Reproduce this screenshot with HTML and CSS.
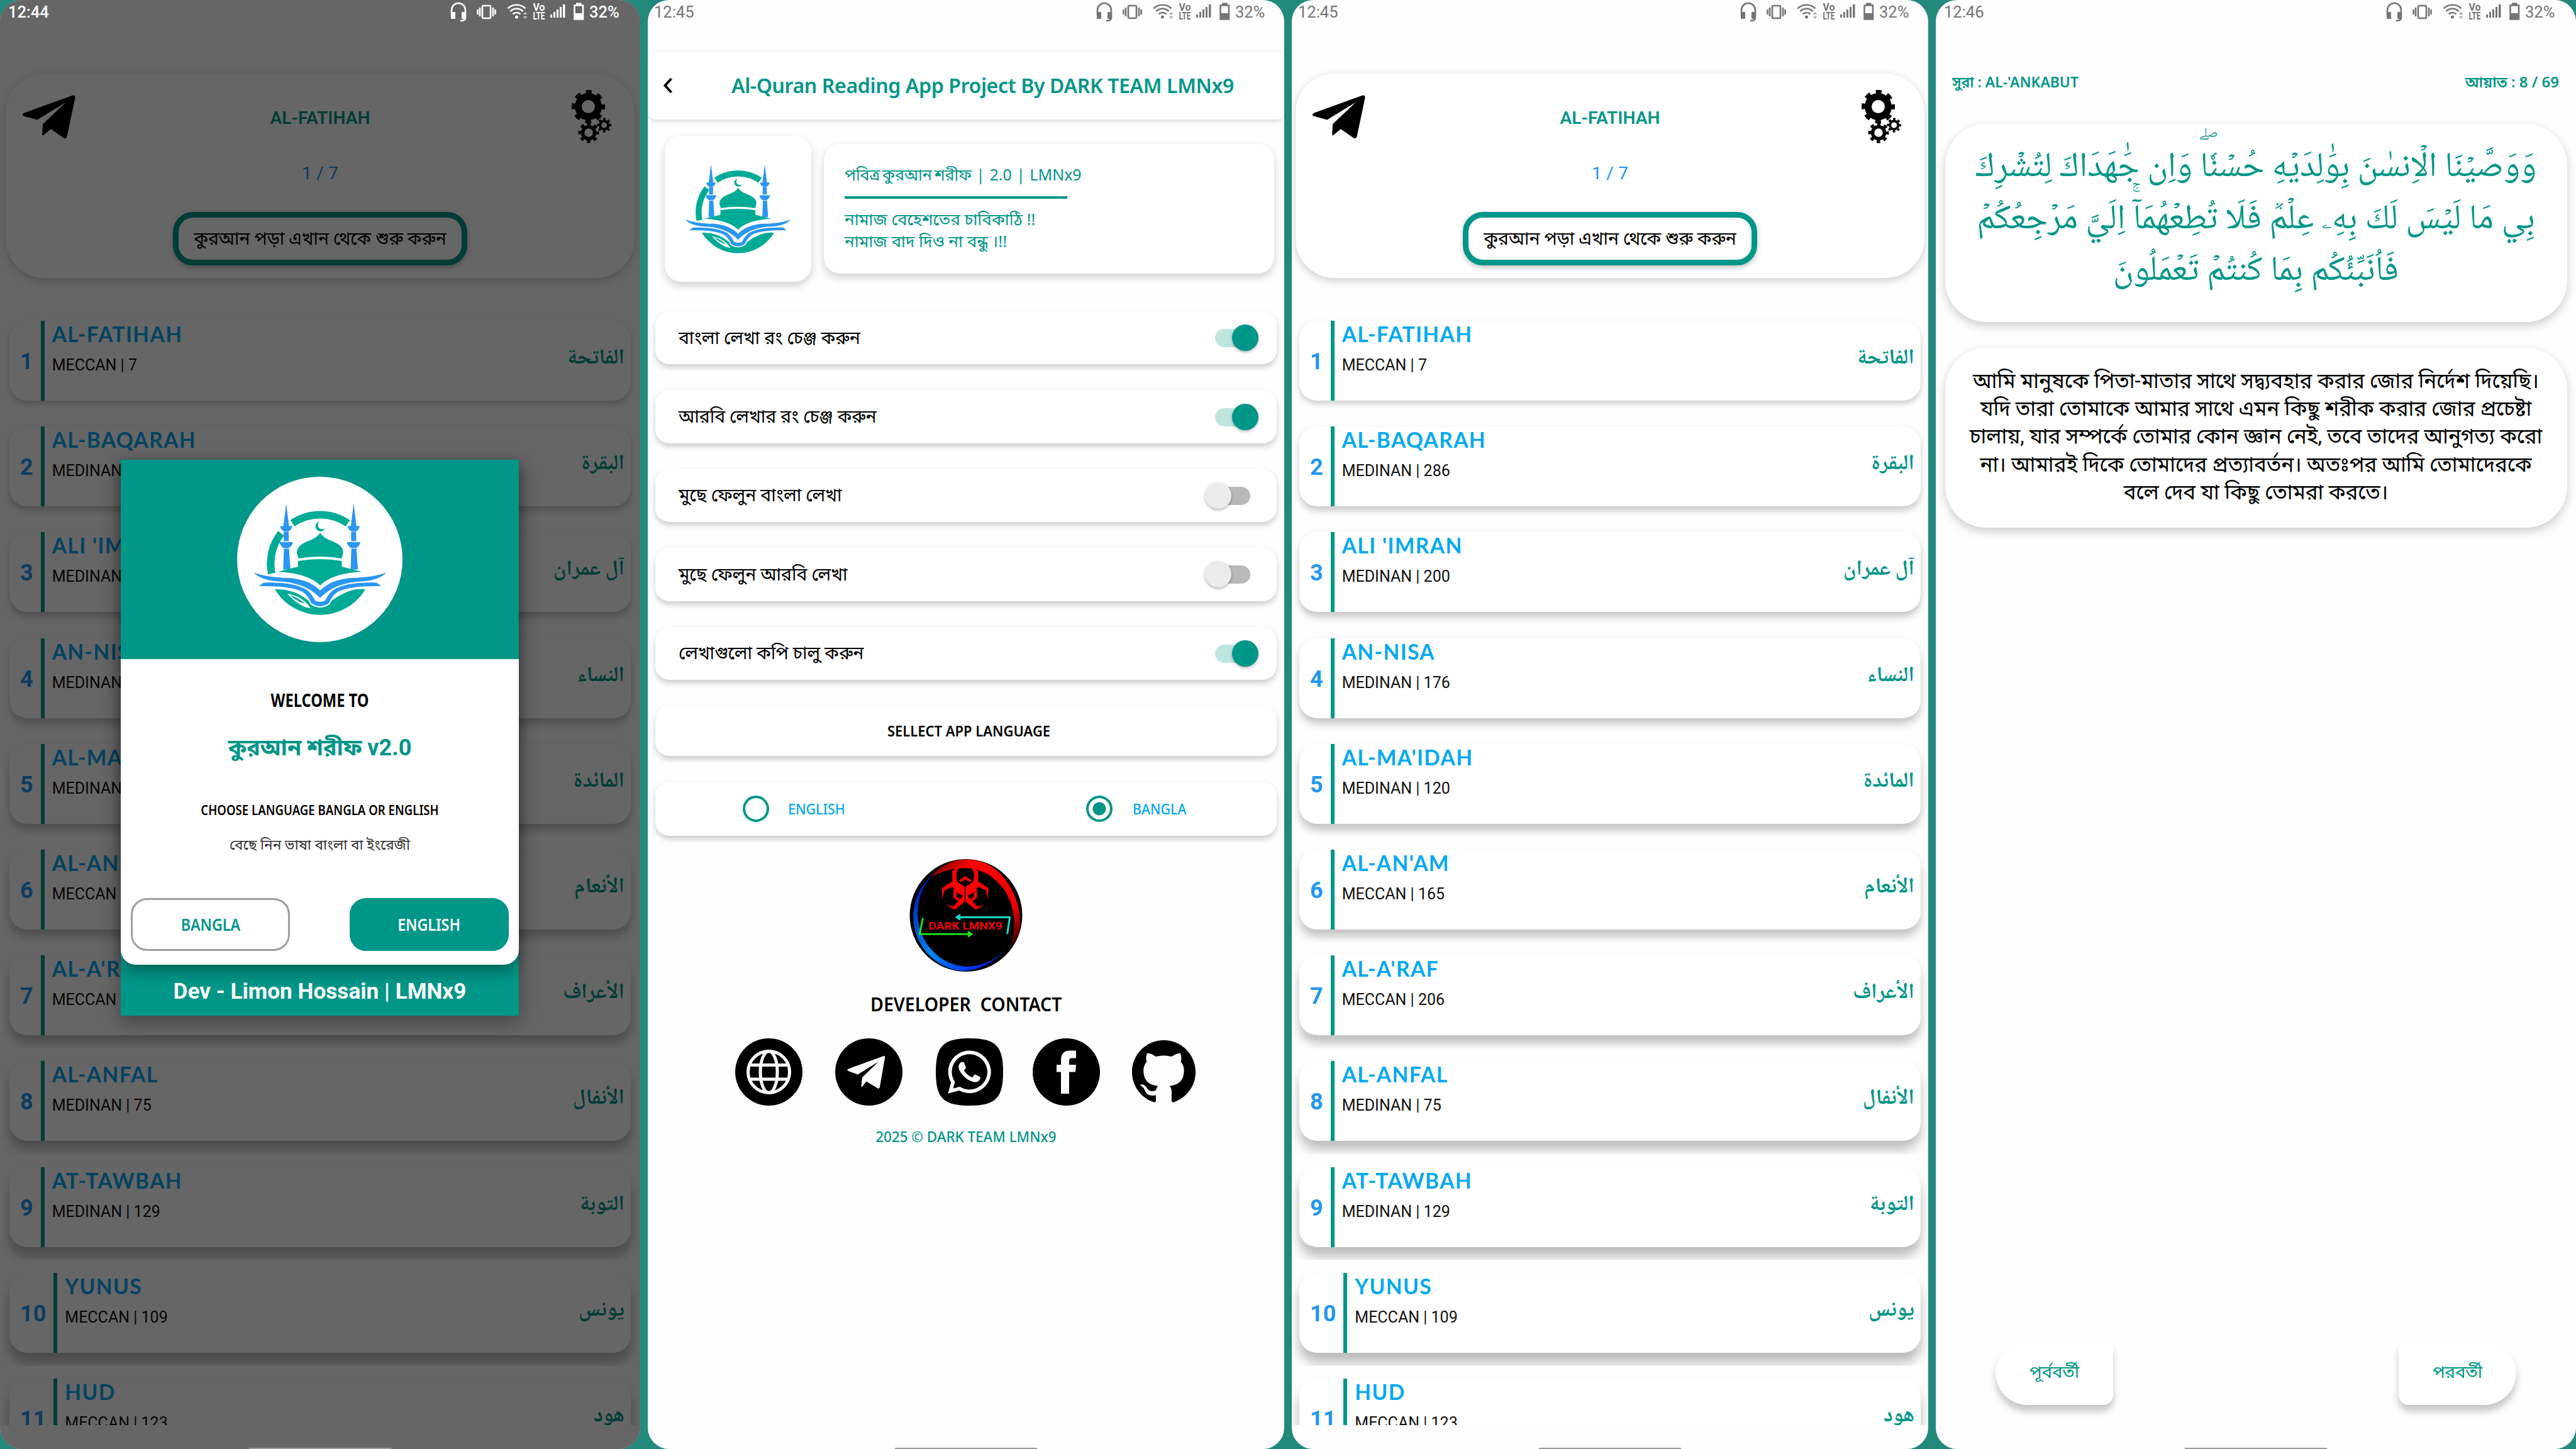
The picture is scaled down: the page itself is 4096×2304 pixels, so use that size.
FILE: index.html
```html
<!DOCTYPE html>
<html lang="bn">
<head>
<meta charset="utf-8">
<title>Al-Quran Reading App</title>
<link rel="stylesheet" href="styles.css">
</head>
<body>
<svg class="defs" aria-hidden="true">
  <symbol id="status" viewBox="713 0 215 38">
    <g fill="none" stroke="currentColor" stroke-width="2.6">
      <path d="M715 25V16a11 11 0 0 1 22 0v12q0 5-8 5"/>
      <path d="M804.500 13.500a20 20 0 0 1 28 0M808.500 18a14 14 0 0 1 20 0M812.500 22.500a8.500 8.500 0 0 1 12 0"/>
      <rect x="764" y="9" width="13" height="20" rx="2"/>
      <path d="M760 12v14M756.500 15v8M781 12v14M784.500 15v8"/>
      <path d="M910.500 8.500h13.500v22h-13.500z"/>
    </g>
    <g fill="currentColor">
      <rect x="714" y="19" width="7" height="11" rx="1"/><rect x="731" y="19" width="7" height="11" rx="1"/>
      <circle cx="818.500" cy="27" r="2.500"/>
      <path d="M828.500 23l3.500-4 3.500 4zM828.500 26l3.500 4 3.500-4z" opacity=".6"/>
      <path d="M872 23h3v5h-3zM877 19h3v9h-3zM882 15h3v13h-3zM887 11h3v17h-3zM892 7h3.500v21h-3.500z"/>
      <path d="M913 4.500h8.500v3.500h-8.500zM910 21h15v10h-15z"/>
      <text x="844.500" y="17" class="volte" textLength="19" lengthAdjust="spacingAndGlyphs">Vo</text>
      <text x="844.500" y="31" class="volte" textLength="19" lengthAdjust="spacingAndGlyphs">LTE</text>
    </g>
  </symbol>
  <symbol id="plane" viewBox="0 0 86 71">
    <path d="M80 1Q86-1 85 5L72 67Q70 72 66 69L46 55 34 65Q32 66 32 62L33 47 70 12 24 40 2 34Q-2 32 3 29Z"/>
  </symbol>
  <symbol id="gears" viewBox="0 0 64 85">
    <g fill="none" stroke="#000">
      <circle cx="27.500" cy="26.500" r="16" stroke-width="11"/>
      <circle cx="27.500" cy="26.500" r="23.500" stroke-width="6" stroke-dasharray="9.230" stroke-dashoffset="4.600"/>
      <circle cx="28" cy="68" r="9.500" stroke-width="5.500"/>
      <circle cx="28" cy="68" r="14" stroke-width="5" stroke-dasharray="5.500" stroke-dashoffset="2.750"/>
      <circle cx="52.700" cy="56" r="6.500" stroke-width="4"/>
      <circle cx="52.700" cy="56" r="9.700" stroke-width="3.500" stroke-dasharray="3.810" stroke-dashoffset="1.900"/>
    </g>
  </symbol>
  <symbol id="minaret" viewBox="0 0 24 108">
    <path d="M10.700 0L15.200 36H6.200zM1 36h19.500q-1 6-6.500 8.500H7.500Q2 42 1 36zM6.700 45h8v15h-8zM0 61.500h21.400q-1 6-6.400 9.300H6.400Q1 67.500 0 61.500zM7 72h8.200l2.300 33H5.900z"/>
  </symbol>
  <symbol id="logo" viewBox="26 42 212 182">
    <g fill="none" stroke="#00ab96" stroke-width="12">
      <path d="M88 74A78 78 0 0 1 176 74"/>
      <path d="M70 90A78 78 0 0 0 55 154" stroke-width="12"/>
    </g>
    <path fill="#00ab96" d="M60 179A84 84 0 0 0 204 179Q180 176 152 196L132 206 112 196Q90 178 60 179Z"/>
    <path fill="#fff" d="M80 186Q100 208 117 209 104 190 80 186Z"/>
    <path fill="#00ab96" d="M84 188Q97 192 108 202 94 198 84 188Z"/>
    <g fill="#2b96f3">
      <use href="#minaret" x="67.400" y="42.600" width="24" height="108"/>
      <use href="#minaret" x="174.600" y="42.600" width="24" height="108"/>
    </g>
    <path fill="#00ab96" d="M131 71a8 8 0 1 0 9 11 7 7 0 1 1-9-11zM132 89Q135 96 150 102 172 110 168 124L166 130Q132 124 98 130L95.500 124Q92 110 114 102 129 96 132 89zM97 134Q132 128 166.500 134V143L198 151Q150 154 132 173 114 154 65 151L97 143Z"/>
    <g fill="#2b96f3" stroke="#fff" stroke-width="4" paint-order="stroke">
      <path d="M34.800 174L42 168.500Q92 167 110 179 119 186 124 197 132 201 140 197 145 186 154 179 172 167 222 168.500L229 174Q180 173 160 183 151 189 146 201 132 211 118 201 113 189 104 183 84 173 34.800 174Z"/>
      <path d="M26.300 152Q44 160 84 161 116 164 132 181 148 164 180 161 220 160 237.500 152 226 166 190 167 152 171 132 193 112 171 74 167 38 166 26.300 152Z"/>
    </g>
  </symbol>
</svg>

<main class="board">
  <section class="screen dark">
    <div class="status"><span class="time t">12:44</span><svg class="sicons"><use href="#status"/></svg><span class="batt t">32%</span></div>
    <div class="home"></div>
    <div class="scrim"></div>
    <div class="dialog">
      <div class="sheet">
        <div class="banner"><div class="disc"><svg><use href="#logo"/></svg></div></div>
        <p class="welcome t">WELCOME TO</p>
        <p class="appname t">কুরআন শরীফ v2.0</p>
        <p class="choose t">CHOOSE LANGUAGE BANGLA OR ENGLISH</p>
        <p class="choose-bn t">বেছে নিন ভাষা বাংলা বা ইংরেজী</p>
        <div class="actions"><button><span class="t">BANGLA</span></button><button class="solid"><span class="t">ENGLISH</span></button></div>
      </div>
      <div class="dev"><span class="t">Dev - Limon Hossain | LMNx9</span></div>
    </div>
    <i class="pill"></i>
  </section>

  <section class="screen">
    <div class="status"><span class="time t">12:45</span><svg class="sicons"><use href="#status"/></svg><span class="batt t">32%</span></div>
    <header class="bar">
      <svg class="back" viewBox="0 0 16 26"><path d="M13.500 2L3.500 13 13.500 24" fill="none" stroke="#000" stroke-width="4"/></svg>
      <h1 class="t">Al-Quran Reading App Project By DARK TEAM LMNx9</h1>
    </header>
    <div class="about">
      <div class="logo-card"><svg><use href="#logo"/></svg></div>
      <div class="info">
        <p class="version t">পবিত্র কুরআন শরীফ&nbsp; |&nbsp; 2.0&nbsp; |&nbsp; LMNx9</p>
        <hr>
        <p class="t">নামাজ বেহেশতের চাবিকাঠি !!</p>
        <p class="t">নামাজ বাদ দিও না বন্ধু ।!!</p>
      </div>
    </div>
    <div class="settings">
      <div class="opt"><span class="t">বাংলা লেখা রং চেঞ্জ করুন</span><i class="switch on"></i></div>
      <div class="opt"><span class="t">আরবি লেখার রং চেঞ্জ করুন</span><i class="switch on"></i></div>
      <div class="opt"><span class="t">মুছে ফেলুন বাংলা লেখা</span><i class="switch"></i></div>
      <div class="opt"><span class="t">মুছে ফেলুন আরবি লেখা</span><i class="switch"></i></div>
      <div class="opt"><span class="t">লেখাগুলো কপি চালু করুন</span><i class="switch on"></i></div>
      <div class="opt select"><span class="t">SELLECT APP LANGUAGE</span></div>
      <div class="opt langs">
        <label><i class="radio"></i><span class="t">ENGLISH</span></label>
        <label><i class="radio picked"></i><span class="t">BANGLA</span></label>
      </div>
    </div>
    <svg class="badge" viewBox="0 0 180 180">
      <defs>
        <linearGradient id="ringR" x1="0" y1="0" x2="1" y2="1"><stop offset="0" stop-color="#500"/><stop offset=".25" stop-color="#f00"/><stop offset=".75" stop-color="#e00"/><stop offset="1" stop-color="#200"/></linearGradient>
        <linearGradient id="ringB" x1="0" y1="0" x2="1" y2="1"><stop offset="0" stop-color="#00a"/><stop offset=".5" stop-color="#08e"/><stop offset=".8" stop-color="#03f"/><stop offset="1" stop-color="#004"/></linearGradient>
      </defs>
      <circle cx="90" cy="90" r="90"/>
      <path fill="url(#ringR)" d="M34 28Q60 0 92 0.500 134 2 158 40 180 76 176 112 172 130 162 138 176 90 152 50 110-8 34 28z"/>
      <path fill="url(#ringB)" d="M40 22A88 88 0 0 0 82 179 88 88 0 0 0 154 142 82 82 0 0 1 90 172 82 86 0 0 1 40 22z"/>
      <g fill="#f00">
        <path id="horn" d="M82 10L68 19V36L52 46V64L56 50 68 44 78 55 88 60V44L77 37 75 34V20zM88 56L80 64 70 76 58 73 72 81 88 68zM70 48V62L82 70V65L75 60V48z"/>
        <use href="#horn" transform="translate(177.600) scale(-1 1)"/>
        <path d="M79 34L89 27 99 34 96 37 89 32 82 37z"/>
      </g>
      <g fill="none" stroke-width="3"><path stroke="#1fe01f" d="M21 94L16 120H98M93 116L99 120 93 124"/><path stroke="#1fd8c8" d="M81 89L75 93 81 97M76 93H160L156 120"/></g>
      <text x="30" y="113" textLength="118" lengthAdjust="spacingAndGlyphs">DARK LMNX9</text>
    </svg>
    <h2 class="t">DEVELOPER&nbsp; CONTACT</h2>
    <div class="social">
      <svg viewBox="0 0 107 107"><circle cx="53.500" cy="53.500" r="53.500"/><g fill="none" stroke="#fff" stroke-width="5"><circle cx="53.500" cy="53.500" r="33"/><ellipse cx="53.500" cy="53.500" rx="13.500" ry="33"/><path d="M24 42.500H83M24 65H83"/></g></svg>
      <svg viewBox="0 0 107 107"><circle cx="53.500" cy="53.500" r="53.500"/><path fill="#fff" d="M76 28.500Q80 26.500 79 31L71 77Q70 82 66 78.500L49.500 68.500 43.500 76.500Q41.500 78.500 41.500 74.500L43 62 69 37 36 57.500 21 52Q17.500 50 21 48.500Z"/></svg>
      <svg viewBox="0 0 107 107"><path d="M53.500 0C95 0 107 12 107 53.500S95 107 53.500 107 0 95 0 53.500 12 0 53.500 0z"/><g transform="translate(19.400 14.600) scale(.1525)" fill="#fff"><path d="M380.900 97.100C339 55.100 283.200 32 223.900 32c-122.400 0-222 99.600-222 222 0 39.100 10.200 77.300 29.600 111L0 480l117.700-30.900c32.400 17.700 68.900 27 106.100 27h.1c122.300 0 224.100-99.600 224.100-222 0-59.300-25.200-115-67.100-157zm-157 341.600c-33.200 0-65.700-8.900-94-25.700l-6.700-4-69.800 18.300L72 359.200l-4.400-7c-18.500-29.400-28.200-63.300-28.200-98.200 0-101.700 82.800-184.500 184.600-184.500 49.300 0 95.600 19.200 130.400 54.100 34.800 34.900 56.200 81.200 56.100 130.500 0 101.800-84.900 184.600-186.600 184.600zm101.200-138.200c-5.500-2.800-32.800-16.200-37.900-18-5.100-1.900-8.800-2.800-12.500 2.800-3.700 5.600-14.300 18-17.600 21.800-3.200 3.700-6.500 4.200-12 1.400-32.600-16.300-54-29.100-75.500-66-5.700-9.800 5.700-9.100 16.300-30.300 1.800-3.700.9-6.900-.5-9.700-1.400-2.800-12.500-30.100-17.100-41.200-4.500-10.800-9.100-9.300-12.500-9.500-3.200-.2-6.900-.2-10.600-.2-3.700 0-9.700 1.400-14.800 6.900-5.100 5.600-19.400 19-19.400 46.300 0 27.300 19.900 53.700 22.600 57.400 2.800 3.700 39.100 59.700 94.800 83.800 35.200 15.200 49 16.500 66.600 13.900 10.700-1.600 32.800-13.400 37.400-26.400 4.600-13 4.600-24.100 3.200-26.400-1.300-2.500-5-3.900-10.500-6.600z"/></g></svg>
      <svg viewBox="0 0 107 107"><circle cx="53.500" cy="53.500" r="53.500"/><path fill="#fff" d="M45 88V53.500H38V42H45V35Q45 19.500 59 19.500H69V31.500H62Q58 31.500 58 35.500V42H69L68 53.500H58V88Z"/></svg>
      <svg viewBox="-.7 -.4 25.400 25.400"><path d="M12 .297c-6.630 0-12 5.373-12 12 0 5.303 3.438 9.800 8.205 11.385.6.113.82-.258.82-.577 0-.285-.01-1.040-.015-2.040-3.338.724-4.042-1.610-4.042-1.610C4.422 18.070 3.633 17.700 3.633 17.700c-1.087-.744.084-.729.084-.729 1.205.084 1.838 1.236 1.838 1.236 1.070 1.835 2.809 1.305 3.495.998.108-.776.417-1.305.76-1.605-2.665-.3-5.466-1.332-5.466-5.930 0-1.310.465-2.380 1.235-3.220-.135-.303-.54-1.523.105-3.176 0 0 1.005-.322 3.300 1.230.96-.267 1.980-.399 3-.405 1.020.006 2.040.138 3 .405 2.280-1.552 3.285-1.230 3.285-1.230.645 1.653.24 2.873.12 3.176.765.840 1.230 1.910 1.230 3.220 0 4.610-2.805 5.625-5.475 5.920.42.360.81 1.096.81 2.220 0 1.606-.015 2.896-.015 3.286 0 .315.21.690.825.570C20.565 22.092 24 17.592 24 12.297c0-6.627-5.373-12-12-12"/></svg>
    </div>
    <p class="copy t">2025 © DARK TEAM LMNx9</p>
    <i class="pill"></i>
  </section>

  <section class="screen">
    <div class="status"><span class="time t">12:45</span><svg class="sicons"><use href="#status"/></svg><span class="batt t">32%</span></div>
    <div class="home"></div>
    <i class="pill"></i>
  </section>

  <section class="screen">
    <div class="status"><span class="time t">12:46</span><svg class="sicons"><use href="#status"/></svg><span class="batt t">32%</span></div>
    <div class="ayah-head"><span class="sura t">সুরা : AL-'ANKABUT</span><span class="t">আয়াত : 8 / 69</span></div>
    <div class="ayah" lang="ar" dir="rtl">
      <p class="t">وَوَصَّيۡنَا الۡاِنسٰنَ بِوَٰلِدَيۡهِ حُسۡنٗاۖ وَاِن جَٰهَدَاكَ لِتُشۡرِكَ</p>
      <p class="t">بِي مَا لَيۡسَ لَكَ بِهِۦ عِلۡمٞ فَلَا تُطِعۡهُمَآۚ اِلَيَّ مَرۡجِعُكُمۡ</p>
      <p class="t">فَاُنَبِّئُكُم بِمَا كُنتُمۡ تَعۡمَلُونَ</p>
    </div>
    <div class="meaning">
      <p class="t">আমি মানুষকে পিতা-মাতার সাথে সদ্ব্যবহার করার জোর নির্দেশ দিয়েছি।</p>
      <p class="t">যদি তারা তোমাকে আমার সাথে এমন কিছু শরীক করার জোর প্রচেষ্টা</p>
      <p class="t">চালায়, যার সম্পর্কে তোমার কোন জ্ঞান নেই, তবে তাদের আনুগত্য করো</p>
      <p class="t">না। আমারই দিকে তোমাদের প্রত্যাবর্তন। অতঃপর আমি তোমাদেরকে</p>
      <p class="t">বলে দেব যা কিছু তোমরা করতে।</p>
    </div>
    <div class="pager"><button class="prev t">পূর্ববর্তী</button><button class="next t">পরবর্তী</button></div>
    <i class="pill"></i>
  </section>
</main>
<script src="app.js"></script>
</body>
</html>
```
FILE: styles.css
```css
* { box-sizing: border-box; margin: 0; padding: 0; }
:root { --teal: #009688; --sky: #03a9f4; --ui: "Noto Sans", "Noto Sans Bengali", sans-serif; }
body { width: 4096px; height: 2304px; overflow: hidden; background: #22897b; font-family: Roboto, "Noto Sans Bengali", "Noto Sans", sans-serif; color: #000; }
button { font: inherit; border: 0; background: none; }
.defs { position: absolute; width: 0; height: 0; }
.t { white-space: nowrap; }
.board { display: grid; grid-template-columns: 1018px 1012px 1012px 1018px; gap: 12px; height: 2304px; }
.screen { position: relative; display: flex; flex-direction: column; align-items: center; overflow: hidden; border-radius: 34px; background: #fefefe; }
.status { position: relative; z-index: 3; flex: none; display: flex; width: 1012px; height: 38px; padding-left: 10px; color: #757575; font-size: 25.500px; line-height: 38px; }
.time { width: 703px; }
.sicons { width: 215px; height: 38px; }
.batt { margin-left: 6px; }
.volte { font: bold 16px Roboto, sans-serif; }
.dark .status { color: #fff; font-weight: 500; }
.pill { position: absolute; bottom: 0; left: calc(50% - 113px); width: 226px; height: 2px; background: #999; z-index: 3; }

.home { width: 1012px; }
.hero { display: grid; grid-template-columns: 120px 1fr 120px; width: 1000px; height: 325px; margin: 79px 6px 0; border-radius: 62px; background: #fff; box-shadow: 0 4px 14px rgba(0,0,0,.2); }
.plane { width: 86px; height: 70px; margin: 34px 0 0 26px; }
.gears { width: 64px; height: 85px; margin: 26px 0 0 19px; }
.hero-mid { display: flex; flex-direction: column; align-items: center; }
.hero-mid h3 { margin-top: 51px; font-size: 28.200px; line-height: 40px; font-weight: 600; color: var(--teal); }
.count { margin-top: 48px; font-size: 28.500px; line-height: 40px; color: #2196f3; }
.start { width: 468px; height: 85px; margin-top: 41px; border: 9px solid var(--teal); border-radius: 32px; font-size: 28.200px; line-height: 67px; box-shadow: 0 3px 8px rgba(0,0,0,.25); }
.list { display: flex; flex-direction: column; gap: 41.200px; height: 1824px; padding: 68px 12px 0; overflow: hidden; }
.surah { flex: none; display: flex; height: 127px; border-radius: 28px; background: #fff; clip-path: inset(-8px -12px -21px); }
.num { padding: 0 12px 0 17px; font-size: 36px; font-weight: 700; line-height: 130px; color: #2196f3; }
.rule { width: 6px; background: var(--teal); }
.names { flex: 1; padding: 0 0 0 12px; }
.names h4 { font: 700 33.500px/43px Lato, sans-serif; color: var(--sky); letter-spacing: 1.400px; }
.names p { margin-top: 10px; font-size: 25px; line-height: 36px; color: #111; }
.arabic { padding-right: 10px; font: 700 34px/122px "Noto Naskh Arabic", "Noto Sans Arabic", "DejaVu Sans", sans-serif; color: var(--teal); }

.scrim { position: absolute; inset: 0; z-index: 1; background: rgba(0,0,0,.6); }
.dialog { position: absolute; z-index: 2; left: 192px; top: 731px; width: 633px; height: 884px; background: var(--teal); box-shadow: 0 10px 30px rgba(0,0,0,.35); text-align: center; }
.sheet { height: 803px; border-radius: 0 0 24px 24px; background: #fff; box-shadow: 0 10px 24px rgba(0,0,0,.35); }
.banner { display: flex; justify-content: center; align-items: center; height: 317px; background: var(--teal); }
.disc { width: 263px; height: 263px; padding: 42px 0 0 26px; border-radius: 50%; background: #fff; }
.disc svg { display: block; width: 212px; height: 182px; }
.welcome { margin-top: 45px; font: 700 28px/40px var(--ui); transform: scaleX(.845); }
.appname { margin-top: 34px; font-size: 36px; line-height: 44px; font-weight: 700; color: var(--teal); }
.choose { margin-top: 58px; font: 600 22px/36px var(--ui); transform: scaleX(.846); }
.choose-bn { margin-top: 21px; font-size: 22.600px; line-height: 36px; color: #333; }
.actions { display: flex; justify-content: space-between; padding: 66px 16px 0; }
.actions button { width: 253px; height: 84px; border: 3px solid #9e9e9e; border-radius: 26px; font: 600 27px/78px var(--ui); color: var(--teal); }
.actions span { display: inline-block; transform: scaleX(.86); }
.actions .solid { border-color: var(--teal); background: var(--teal); color: #fff; }
.dev { font-size: 35.200px; line-height: 85px; font-weight: 700; color: #fff; }

.bar { display: flex; align-items: center; flex: none; width: 1012px; height: 108px; margin-top: 44px; padding-left: 24px; border-radius: 12px; background: #fff; box-shadow: 0 3px 8px rgba(0,0,0,.14); }
.back { width: 16px; height: 26px; }
.bar h1 { margin-left: 93px; font: 600 32px/50px var(--ui); letter-spacing: -.360px; color: var(--teal); }
.about { display: flex; align-items: center; gap: 20px; width: 969px; height: 232px; margin: 26px 0 0 11px; }
.logo-card { width: 233px; height: 232px; padding: 45px 0 0 32px; border-radius: 26px; background: #fff; box-shadow: 0 6px 14px rgba(0,0,0,.18); }
.logo-card svg { width: 169px; height: 145px; }
.info { width: 716px; height: 206px; padding: 31px 33px; border-radius: 26px; background: #fff; box-shadow: 0 6px 14px rgba(0,0,0,.18); color: var(--teal); font-family: var(--ui); font-size: 26px; line-height: 35px; }
.version { font-size: 25px; word-spacing: -2.800px; }
.info hr { width: 354px; height: 4px; margin: 17px 0 15px; border: 0; background: var(--teal); }
.settings { display: flex; flex-direction: column; gap: 41px; margin-top: 47px; }
.opt { display: flex; align-items: center; justify-content: space-between; width: 988px; height: 84.400px; padding: 0 28px 0 37px; border-radius: 22px; background: #fff; box-shadow: 0 5px 10px rgba(0,0,0,.2); font-size: 28.300px; line-height: 87px; }
.switch { position: relative; width: 86px; height: 42px; }
.switch::before { content: ""; position: absolute; left: 16px; top: 7px; width: 56px; height: 29px; border-radius: 15px; background: #b9b9b9; }
.switch::after { content: ""; position: absolute; left: 0; top: 0; width: 42px; height: 42px; border-radius: 50%; background: #ececec; box-shadow: 0 2px 4px rgba(0,0,0,.3); }
.switch.on::before { background: #bfe5e1; }
.switch.on::after { left: 43px; background: var(--teal); }
.opt.select { justify-content: center; height: 80px; font: 600 24px/80px var(--ui); }
.select span { transform: scaleX(.915); }
.opt.langs { height: 86px; padding: 0 133px 0 139px; font: 500 24px/86px var(--ui); color: var(--sky); }
.langs label { display: flex; align-items: center; gap: 30px; }
.langs span { transform: scaleX(.89); transform-origin: left; }
.radio { width: 42px; height: 42px; border: 4px solid var(--teal); border-radius: 50%; }
.radio.picked { background: radial-gradient(circle, var(--teal) 10px, transparent 11px); margin-right: 2px; }
.badge { flex: none; width: 180px; height: 179px; margin-top: 37px; }
.badge text { font: 700 17px Roboto, sans-serif; fill: #e00; }
h2 { margin-top: 32px; font: 600 30px/40px var(--ui); transform: scaleX(.95); }
.social { display: flex; gap: 52.500px; margin-top: 34px; }
.social svg { width: 107px; height: 107px; }
.social svg:nth-child(n+4) { margin-left: -5px; }
.copy { margin-top: 31px; font: 500 24px/36px var(--ui); color: var(--teal); transform: scaleX(.933); }

.ayah-head { display: flex; justify-content: space-between; width: 1012px; margin-top: 72px; padding: 0 24px 0 23px; font: 600 24px/40px var(--ui); color: var(--teal); }
.sura { transform: scaleX(.953); transform-origin: left; }
.ayah, .meaning { width: 989px; border-radius: 66px; background: #fff; box-shadow: 0 6px 16px rgba(0,0,0,.2); text-align: center; }
.ayah { height: 315px; margin-top: 47px; padding-top: 30px; font: 400 55.500px/82.500px "Noto Naskh Arabic", "Noto Sans Arabic", "DejaVu Sans", sans-serif; color: var(--teal); }
.meaning { height: 286px; margin-top: 41px; padding-top: 31px; font-size: 33.200px; line-height: 44.200px; }
.pager { display: flex; justify-content: space-between; width: 828px; margin-top: 1293px; }
.pager button { width: 187px; height: 102px; border-radius: 51px 16px 16px 51px; background: #fff; box-shadow: 0 10px 12px rgba(0,0,0,.22); font-size: 27.500px; color: var(--teal); }
.pager .next { border-radius: 16px 51px 51px 16px; }
```
FILE: app.js
```js
const surahs = [
  ["AL-FATIHAH", "MECCAN | 7", "الفاتحة"],
  ["AL-BAQARAH", "MEDINAN | 286", "البقرة"],
  ["ALI 'IMRAN", "MEDINAN | 200", "آل عمران"],
  ["AN-NISA", "MEDINAN | 176", "النساء"],
  ["AL-MA'IDAH", "MEDINAN | 120", "المائدة"],
  ["AL-AN'AM", "MECCAN | 165", "الأنعام"],
  ["AL-A'RAF", "MECCAN | 206", "الأعراف"],
  ["AL-ANFAL", "MEDINAN | 75", "الأنفال"],
  ["AT-TAWBAH", "MEDINAN | 129", "التوبة"],
  ["YUNUS", "MECCAN | 109", "يونس"],
  ["HUD", "MECCAN | 123", "هود"]
];

// Row shadows deepen towards the bottom of the list.
const row = ([name, info, arabic], i) => `
  <article class="surah" style="box-shadow:0 ${5 + i * 1.2}px ${10 + i}px rgba(0,0,0,${0.2 + i * 0.008})">
    <span class="num">${i + 1}</span><i class="rule"></i>
    <div class="names"><h4><span class="t">${name}</span></h4><p><span class="t">${info}</span></p></div>
    <span class="arabic t" lang="ar" dir="rtl">${arabic}</span>
  </article>`;

document.querySelectorAll(".home").forEach((home) => {
  home.innerHTML = `
    <div class="hero">
      <svg class="plane"><use href="#plane"/></svg>
      <div class="hero-mid"><h3 class="t">AL-FATIHAH</h3><p class="count t">1 / 7</p><button class="start t">কুরআন পড়া এখান থেকে শুরু করুন</button></div>
      <svg class="gears"><use href="#gears"/></svg>
    </div>
    <div class="list">${surahs.map(row).join("")}</div>`;
});
```
